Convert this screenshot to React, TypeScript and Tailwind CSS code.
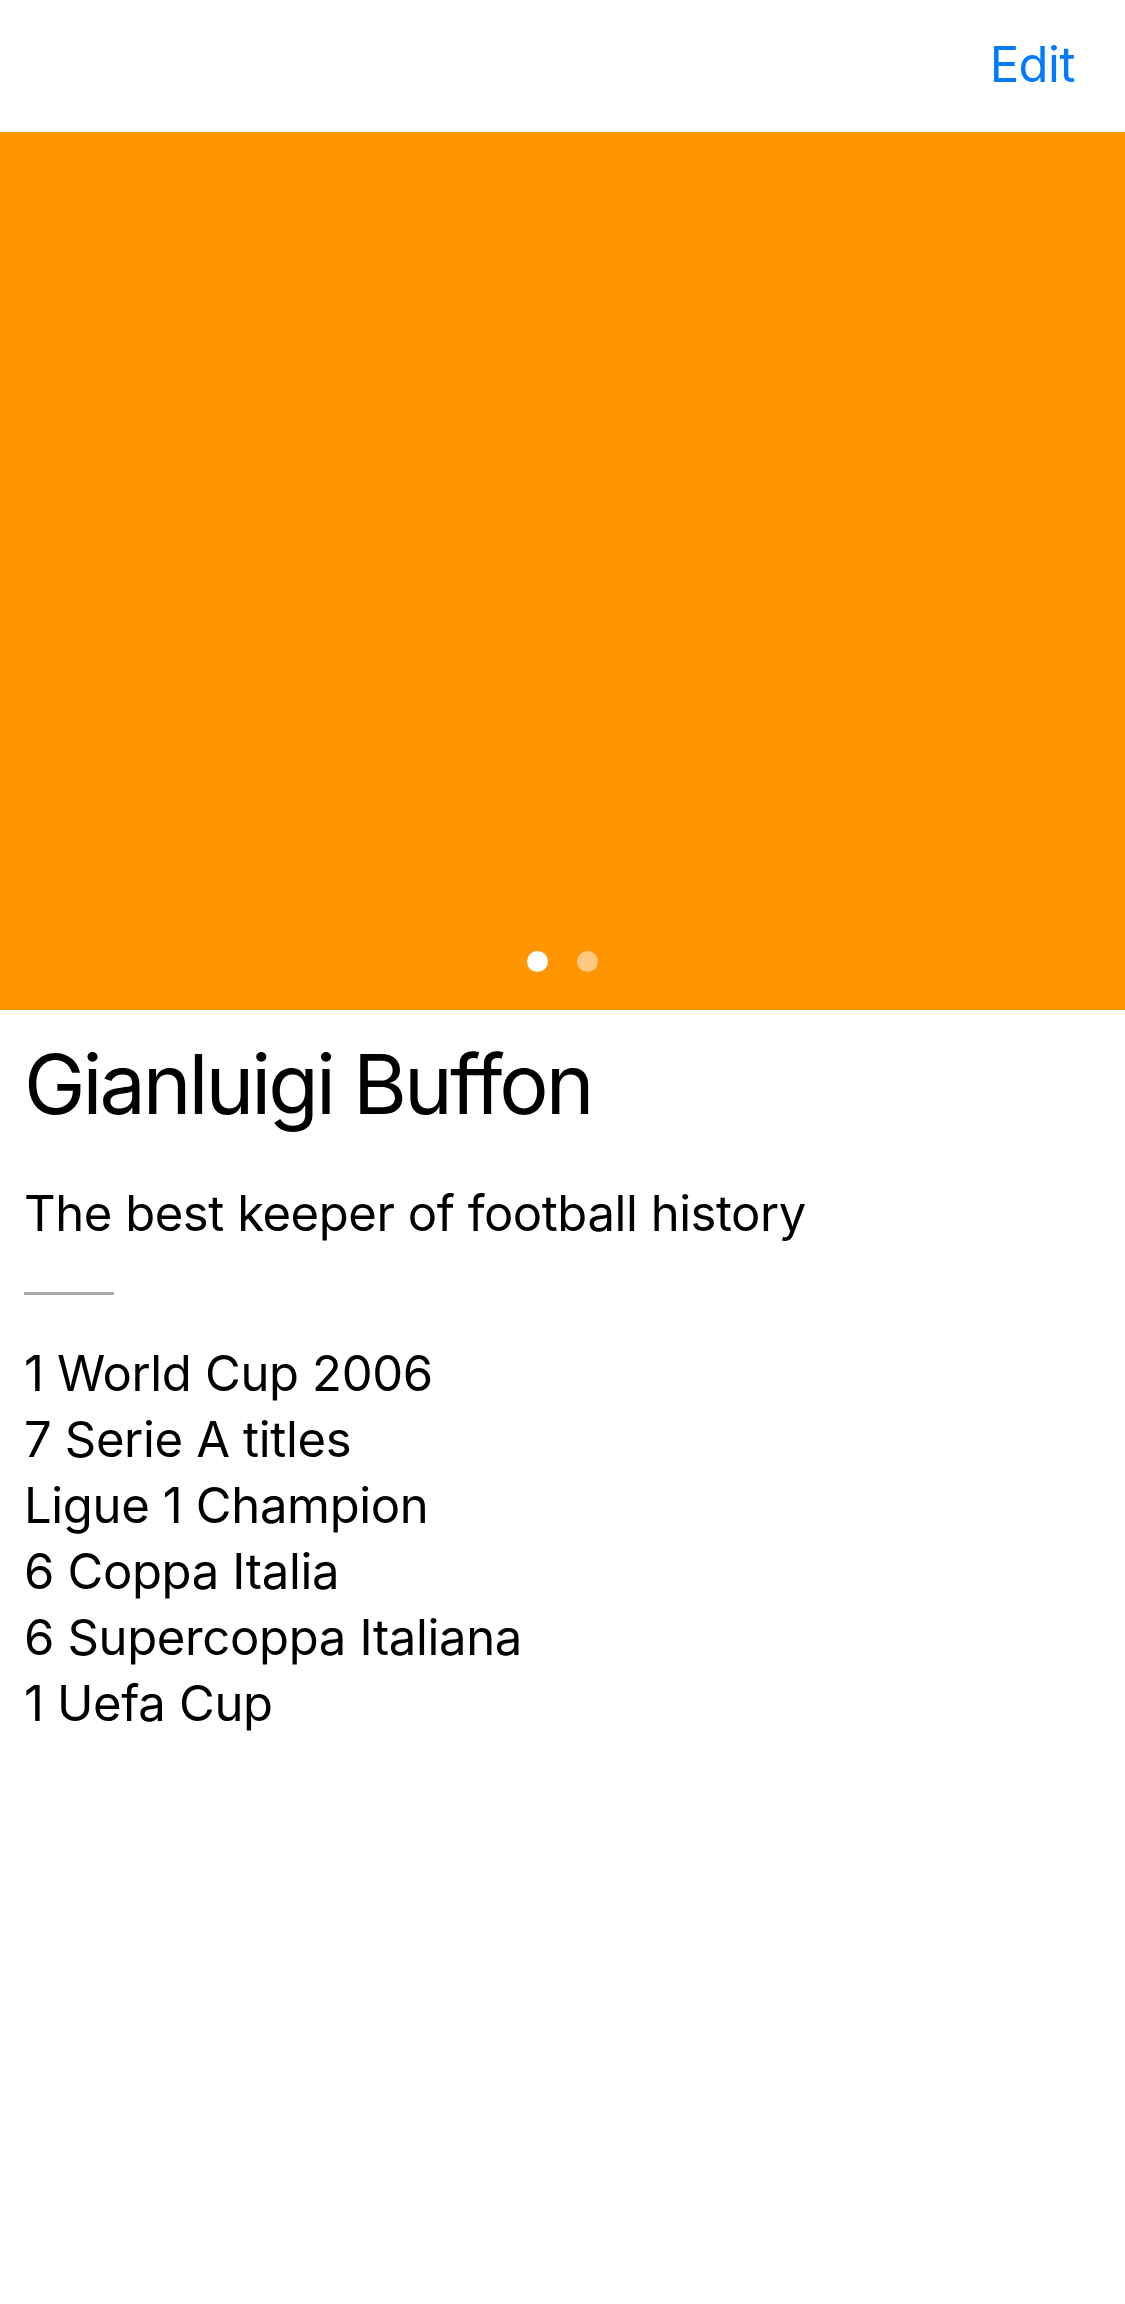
import React from "react";

export default function App() {
  const items = [
    "1 World Cup 2006",
    "7 Serie A titles",
    "Ligue 1 Champion",
    "6 Coppa Italia",
    "6 Supercoppa Italiana",
    "1 Uefa Cup",
  ];
  return (
    <div className="w-[1125px] h-[2304px] bg-white text-black [font-variant-ligatures:none]" style={{ fontFamily: "Inter, 'Noto Sans', sans-serif" }}>
      <div className="h-[132px] flex justify-end pr-[50px] pt-[35px]">
        <span className="text-[49px] leading-[60px] tracking-[-0.5px] text-[#007aff]">Edit</span>
      </div>
      <div className="h-[878px] bg-[#ff9500] flex flex-col justify-end items-center pb-[38px]">
        <div className="flex gap-[29px]">
          <div className="w-[21px] h-[21px] rounded-full bg-white" />
          <div className="w-[21px] h-[21px] rounded-full bg-white/50" />
        </div>
      </div>
      <div className="px-[24px]">
        <div className="mt-[24px] text-[82.5px] leading-[100px] tracking-[-3px]">Gianluigi Buffon</div>
        <div className="mt-[51px] text-[49px] leading-[58px] tracking-[-0.45px]">The best keeper of football history</div>
        <div className="mt-[49px] w-[90px] h-[3px] bg-[#aaaaaa]" />
        <div className="mt-[46px] text-[49px] leading-[66px] tracking-[-0.35px]">
          {items.map((t) => (
            <div key={t}>{t}</div>
          ))}
        </div>
      </div>
    </div>
  );
}
